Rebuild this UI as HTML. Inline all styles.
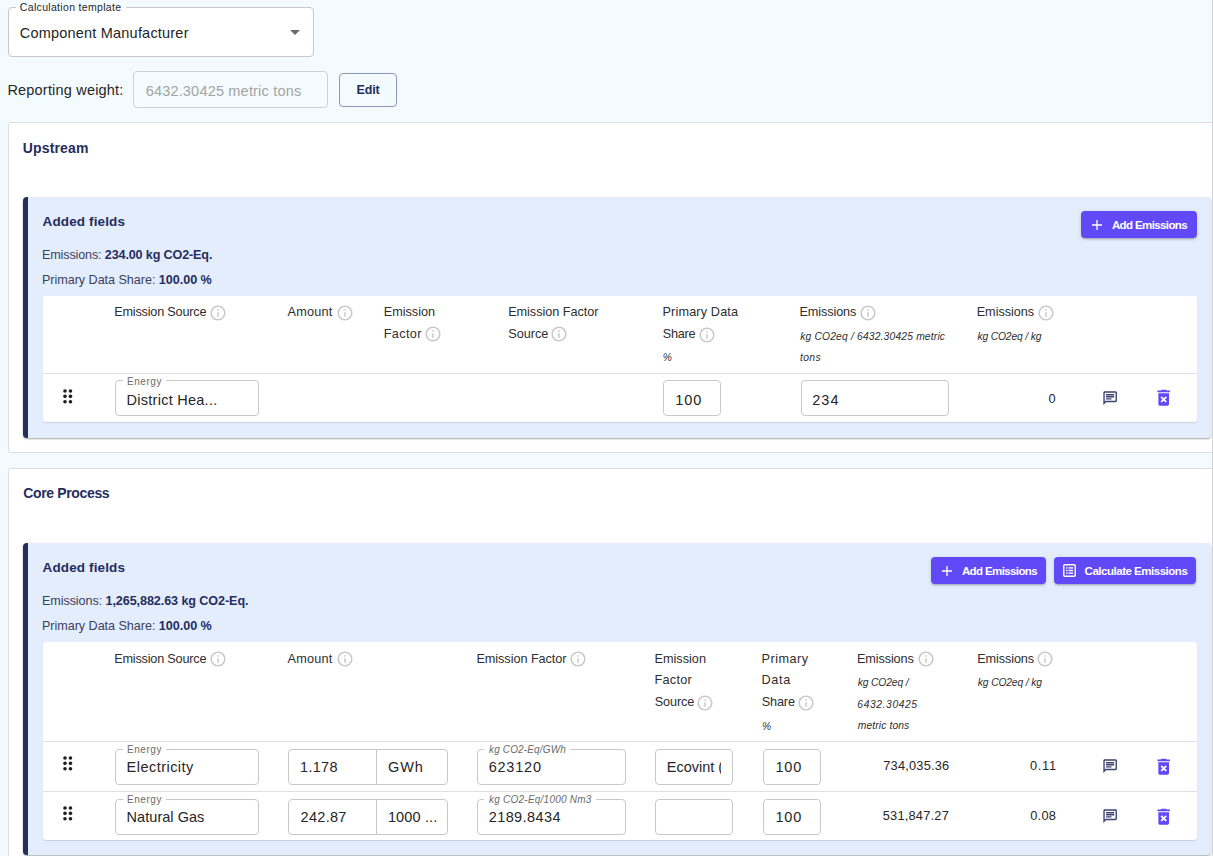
<!DOCTYPE html>
<html><head><meta charset="utf-8"><style>
html,body{margin:0;padding:0}
body{width:1213px;height:856px;overflow:hidden;position:relative;background:#f3fbfe;font-family:"Liberation Sans",sans-serif}
.t{position:absolute;white-space:nowrap}
.r{position:absolute}
b{font-weight:bold}
</style></head><body>
<div class="r" style="left:8px;top:7px;width:306px;height:50px;box-sizing:border-box;border:1px solid #c8c8c8;border-radius:4px;background:#fff"></div>
<div class="r" style="left:16px;top:7px;width:110px;height:1px;background:#fff"></div>
<div id="t0" class="t" style="left:19.86px;top:2.00px;font-size:10.5px;line-height:10.5px;color:#1f1f1f;letter-spacing:0.317px;">Calculation template</div>
<div id="t1" class="t" style="left:19.78px;top:26.00px;font-size:14.5px;line-height:14.5px;color:#1f1f1f;letter-spacing:0.204px;">Component Manufacturer</div>
<svg class="r" style="left:290px;top:30px" width="10" height="5" viewBox="0 0 10 5"><path d="M0 0h10L5 5z" fill="#6a6a6a"/></svg>
<div id="t2" class="t" style="left:7.43px;top:83.00px;font-size:14.5px;line-height:14.5px;color:#262626;letter-spacing:0.194px;">Reporting weight:</div>
<div class="r" style="left:133px;top:71px;width:195px;height:37px;box-sizing:border-box;border:1px solid #cdd1d6;border-radius:4px"></div>
<div id="t3" class="t" style="left:145.65px;top:84.00px;font-size:14.5px;line-height:14.5px;color:#a3a3a3;letter-spacing:0.189px;">6432.30425 metric tons</div>
<div class="r" style="left:339px;top:73px;width:58px;height:34px;box-sizing:border-box;border:1px solid #8e96b8;border-radius:4px"></div>
<div id="t4" class="t" style="left:356.47px;top:84.00px;font-size:12.5px;line-height:12.5px;font-weight:bold;color:#252d5e;letter-spacing:-0.102px;">Edit</div>
<div class="r" style="left:8px;top:122px;width:1225px;height:331px;box-sizing:border-box;border:1px solid #dedede;border-radius:3px;background:#fff"></div>
<div id="t5" class="t" style="left:22.85px;top:141.00px;font-size:14px;line-height:14px;font-weight:bold;color:#252d5e;letter-spacing:0.129px;">Upstream</div>
<div class="r" style="left:8px;top:468px;width:1225px;height:428px;box-sizing:border-box;border:1px solid #dedede;border-radius:3px;background:#fff"></div>
<div id="t6" class="t" style="left:23.25px;top:486.00px;font-size:14px;line-height:14px;font-weight:bold;color:#252d5e;letter-spacing:-0.352px;">Core Process</div>
<div class="r" style="left:23px;top:197px;width:1188px;height:240.5px;box-sizing:border-box;border-left:5px solid #232e5c;border-radius:4px;background:#e4edfc;box-shadow:0 1px 2px rgba(0,0,0,0.35)"></div>
<div id="t7" class="t" style="left:42.60px;top:215.00px;font-size:13.5px;line-height:13.5px;font-weight:bold;color:#252d5e;letter-spacing:0.126px;">Added fields</div>
<div id="t8" class="t" style="left:42.00px;top:249.00px;font-size:12.6px;line-height:12.6px;color:#3a4062;letter-spacing:-0.143px;">Emissions: <b style="color:#252d5e">234.00 kg CO2-Eq.</b></div>
<div id="t9" class="t" style="left:42.00px;top:274.00px;font-size:12.6px;line-height:12.6px;color:#3a4062;letter-spacing:-0.038px;">Primary Data Share: <b style="color:#252d5e">100.00 %</b></div>
<div class="r" style="left:1081px;top:211px;width:116px;height:27px;background:#6249f7;border-radius:4px;box-shadow:0 2px 2px -1px rgba(0,0,0,0.25),0 1px 4px rgba(0,0,0,0.12)"></div>
<svg class="r" style="left:1091.5px;top:219.5px" width="10" height="10" viewBox="0 0 10 10"><path d="M5 0v10M0 5h10" stroke="#fff" stroke-width="1.3"/></svg>
<div id="t10" class="t" style="left:1111.93px;top:220.00px;font-size:11.5px;line-height:11.5px;font-weight:bold;color:#fff;letter-spacing:-0.610px;">Add Emissions</div>
<div class="r" style="left:43px;top:296px;width:1154px;height:126px;background:#fff;border-radius:3px;box-shadow:0 1px 1px rgba(0,0,0,0.12)"></div>
<div class="r" style="left:43px;top:373px;width:1154px;height:1px;background:#e0e0e0"></div>
<div id="t11" class="t" style="left:114.17px;top:306.00px;font-size:12.7px;line-height:12.7px;color:#2e2e2e;letter-spacing:-0.204px;">Emission Source</div>
<div id="t12" class="t" style="left:287.58px;top:306.00px;font-size:12.7px;line-height:12.7px;color:#2e2e2e;letter-spacing:0.207px;">Amount</div>
<div id="t13" class="t" style="left:383.72px;top:306.00px;font-size:12.7px;line-height:12.7px;color:#2e2e2e;letter-spacing:-0.018px;">Emission</div>
<div id="t14" class="t" style="left:383.72px;top:328.00px;font-size:12.7px;line-height:12.7px;color:#2e2e2e;letter-spacing:0.339px;">Factor</div>
<div id="t15" class="t" style="left:508.17px;top:306.00px;font-size:12.7px;line-height:12.7px;color:#2e2e2e;letter-spacing:-0.050px;">Emission Factor</div>
<div id="t16" class="t" style="left:508.32px;top:328.00px;font-size:12.7px;line-height:12.7px;color:#2e2e2e;letter-spacing:-0.036px;">Source</div>
<div id="t17" class="t" style="left:662.51px;top:306.00px;font-size:12.7px;line-height:12.7px;color:#2e2e2e;letter-spacing:0.139px;">Primary Data</div>
<div id="t18" class="t" style="left:662.67px;top:328.00px;font-size:12.7px;line-height:12.7px;color:#2e2e2e;letter-spacing:-0.213px;">Share</div>
<div id="t19" class="t" style="left:662.66px;top:353.00px;font-size:10.3px;line-height:10.3px;font-style:italic;color:#2e2e2e;letter-spacing:0.000px;">%</div>
<div id="t20" class="t" style="left:799.42px;top:306.00px;font-size:12.7px;line-height:12.7px;color:#2e2e2e;letter-spacing:-0.101px;">Emissions</div>
<div id="t21" class="t" style="left:800.21px;top:332.00px;font-size:10.3px;line-height:10.3px;font-style:italic;color:#2e2e2e;letter-spacing:0.169px;">kg CO2eq / 6432.30425 metric</div>
<div id="t22" class="t" style="left:799.92px;top:353.00px;font-size:10.3px;line-height:10.3px;font-style:italic;color:#2e2e2e;letter-spacing:0.387px;">tons</div>
<div id="t23" class="t" style="left:976.72px;top:306.00px;font-size:12.7px;line-height:12.7px;color:#2e2e2e;letter-spacing:-0.058px;">Emissions</div>
<div id="t24" class="t" style="left:977.40px;top:332.00px;font-size:10.3px;line-height:10.3px;font-style:italic;color:#2e2e2e;letter-spacing:-0.140px;">kg CO2eq / kg</div>
<svg class="r" style="left:209.00px;top:303.80px" width="18" height="18" viewBox="0 0 24 24"><path d="M11 7h2v2h-2zm0 4h2v6h-2zm1-9C6.48 2 2 6.48 2 12s4.48 10 10 10 10-4.48 10-10S17.52 2 12 2zm0 18c-4.41 0-8-3.59-8-8s3.59-8 8-8 8 3.59 8 8-3.59 8-8 8z" fill="#c9c9c9"/></svg>
<svg class="r" style="left:335.70px;top:303.80px" width="18" height="18" viewBox="0 0 24 24"><path d="M11 7h2v2h-2zm0 4h2v6h-2zm1-9C6.48 2 2 6.48 2 12s4.48 10 10 10 10-4.48 10-10S17.52 2 12 2zm0 18c-4.41 0-8-3.59-8-8s3.59-8 8-8 8 3.59 8 8-3.59 8-8 8z" fill="#c9c9c9"/></svg>
<svg class="r" style="left:423.80px;top:325.40px" width="18" height="18" viewBox="0 0 24 24"><path d="M11 7h2v2h-2zm0 4h2v6h-2zm1-9C6.48 2 2 6.48 2 12s4.48 10 10 10 10-4.48 10-10S17.52 2 12 2zm0 18c-4.41 0-8-3.59-8-8s3.59-8 8-8 8 3.59 8 8-3.59 8-8 8z" fill="#c9c9c9"/></svg>
<svg class="r" style="left:550.00px;top:325.40px" width="18" height="18" viewBox="0 0 24 24"><path d="M11 7h2v2h-2zm0 4h2v6h-2zm1-9C6.48 2 2 6.48 2 12s4.48 10 10 10 10-4.48 10-10S17.52 2 12 2zm0 18c-4.41 0-8-3.59-8-8s3.59-8 8-8 8 3.59 8 8-3.59 8-8 8z" fill="#c9c9c9"/></svg>
<svg class="r" style="left:697.50px;top:325.60px" width="18" height="18" viewBox="0 0 24 24"><path d="M11 7h2v2h-2zm0 4h2v6h-2zm1-9C6.48 2 2 6.48 2 12s4.48 10 10 10 10-4.48 10-10S17.52 2 12 2zm0 18c-4.41 0-8-3.59-8-8s3.59-8 8-8 8 3.59 8 8-3.59 8-8 8z" fill="#c9c9c9"/></svg>
<svg class="r" style="left:858.60px;top:304.20px" width="18" height="18" viewBox="0 0 24 24"><path d="M11 7h2v2h-2zm0 4h2v6h-2zm1-9C6.48 2 2 6.48 2 12s4.48 10 10 10 10-4.48 10-10S17.52 2 12 2zm0 18c-4.41 0-8-3.59-8-8s3.59-8 8-8 8 3.59 8 8-3.59 8-8 8z" fill="#c9c9c9"/></svg>
<svg class="r" style="left:1036.60px;top:304.20px" width="18" height="18" viewBox="0 0 24 24"><path d="M11 7h2v2h-2zm0 4h2v6h-2zm1-9C6.48 2 2 6.48 2 12s4.48 10 10 10 10-4.48 10-10S17.52 2 12 2zm0 18c-4.41 0-8-3.59-8-8s3.59-8 8-8 8 3.59 8 8-3.59 8-8 8z" fill="#c9c9c9"/></svg>
<svg class="r" style="left:63.10px;top:389.05px" width="12" height="15" viewBox="0 0 12 15"><circle cx="2.00" cy="2.00" r="1.8" fill="#1e1e1e"/><circle cx="2.00" cy="7.37" r="1.8" fill="#1e1e1e"/><circle cx="2.00" cy="12.74" r="1.8" fill="#1e1e1e"/><circle cx="7.45" cy="2.00" r="1.8" fill="#1e1e1e"/><circle cx="7.45" cy="7.37" r="1.8" fill="#1e1e1e"/><circle cx="7.45" cy="12.74" r="1.8" fill="#1e1e1e"/></svg>
<div class="r" style="left:115px;top:380px;width:144px;height:36px;box-sizing:border-box;border:1px solid #c8c8c8;border-radius:4px;background:#fff"></div>
<div class="r" style="left:123px;top:380px;width:43px;height:1px;background:#fff"></div>
<div id="t25" class="t" style="left:126.89px;top:377.00px;font-size:10px;line-height:10px;color:#6b6b6b;letter-spacing:0.584px;">Energy</div>
<div id="t26" class="t" style="left:126.62px;top:393.00px;font-size:14.5px;line-height:14.5px;color:#262626;letter-spacing:0.257px;">District Hea...</div>
<div class="r" style="left:663px;top:380px;width:58px;height:36px;box-sizing:border-box;border:1px solid #c8c8c8;border-radius:4px;background:#fff"></div>
<div id="t27" class="t" style="left:675.30px;top:393.00px;font-size:14.5px;line-height:14.5px;color:#262626;letter-spacing:0.855px;">100</div>
<div class="r" style="left:801px;top:380px;width:148px;height:36px;box-sizing:border-box;border:1px solid #c8c8c8;border-radius:4px;background:#fff"></div>
<div id="t28" class="t" style="left:812.17px;top:393.00px;font-size:14.5px;line-height:14.5px;color:#262626;letter-spacing:1.054px;">234</div>
<div id="t29" class="t" style="left:1048.39px;top:393.00px;font-size:12.8px;line-height:12.8px;color:#262626;letter-spacing:0.000px;">0</div>
<svg class="r" style="left:1102.04px;top:390.04px" width="16.3" height="16.3" viewBox="0 0 24 24"><path d="M4 4h16v12H5.17L4 17.17V4m0-2c-1.1 0-1.99.9-1.99 2L2 22l4-4h14c1.1 0 2-.9 2-2V4c0-1.1-.9-2-2-2H4zm2 10h8v2H6v-2zm0-3h12v2H6V9zm0-3h12v2H6V6z" fill="#3a4272"/></svg>
<svg class="r" style="left:1152.64px;top:387.32px" width="21.4" height="21.4" viewBox="0 0 24 24"><path d="M6 19c0 1.1.9 2 2 2h8c1.1 0 2-.9 2-2V7H6v12zm2.46-7.12 1.41-1.41L12 12.59l2.12-2.12 1.41 1.41L13.41 14l2.12 2.12-1.41 1.41L12 15.41l-2.12 2.12-1.41-1.41L10.59 14l-2.13-2.12zM15.5 4l-1-1h-5l-1 1H5v2h14V4z" fill="#6249f7"/></svg>
<div class="r" style="left:23px;top:542.5px;width:1188px;height:312.20000000000005px;box-sizing:border-box;border-left:5px solid #232e5c;border-radius:4px;background:#e4edfc;box-shadow:0 1px 2px rgba(0,0,0,0.35)"></div>
<div id="t30" class="t" style="left:42.60px;top:561.00px;font-size:13.5px;line-height:13.5px;font-weight:bold;color:#252d5e;letter-spacing:0.126px;">Added fields</div>
<div id="t31" class="t" style="left:42.00px;top:595.00px;font-size:12.6px;line-height:12.6px;color:#3a4062;letter-spacing:-0.084px;">Emissions: <b style="color:#252d5e">1,265,882.63 kg CO2-Eq.</b></div>
<div id="t32" class="t" style="left:42.00px;top:620.00px;font-size:12.6px;line-height:12.6px;color:#3a4062;letter-spacing:-0.038px;">Primary Data Share: <b style="color:#252d5e">100.00 %</b></div>
<div class="r" style="left:931px;top:557px;width:115px;height:27px;background:#6249f7;border-radius:4px;box-shadow:0 2px 2px -1px rgba(0,0,0,0.25),0 1px 4px rgba(0,0,0,0.12)"></div>
<svg class="r" style="left:941.5px;top:565.5px" width="10" height="10" viewBox="0 0 10 10"><path d="M5 0v10M0 5h10" stroke="#fff" stroke-width="1.3"/></svg>
<div id="t33" class="t" style="left:961.93px;top:566.00px;font-size:11.5px;line-height:11.5px;font-weight:bold;color:#fff;letter-spacing:-0.610px;">Add Emissions</div>
<div class="r" style="left:1054px;top:557px;width:142px;height:27px;background:#6249f7;border-radius:4px;box-shadow:0 2px 2px -1px rgba(0,0,0,0.25),0 1px 4px rgba(0,0,0,0.12)"></div>
<svg class="r" style="left:1062.5px;top:564px" width="13" height="13" viewBox="0 0 13 13"><rect x="0.8" y="0.8" width="11.4" height="11.4" rx="1" fill="none" stroke="#fff" stroke-width="1.4"/><rect x="3" y="3.2" width="1.5" height="1.4" fill="#fff"/><rect x="5.5" y="3.2" width="4.5" height="1.4" fill="#fff"/><rect x="3" y="5.8" width="1.5" height="1.4" fill="#fff"/><rect x="5.5" y="5.8" width="4.5" height="1.4" fill="#fff"/><rect x="3" y="8.4" width="1.5" height="1.4" fill="#fff"/><rect x="5.5" y="8.4" width="4.5" height="1.4" fill="#fff"/></svg>
<div id="t34" class="t" style="left:1084.60px;top:566.00px;font-size:11.5px;line-height:11.5px;font-weight:bold;color:#fff;letter-spacing:-0.481px;">Calculate Emissions</div>
<div class="r" style="left:43px;top:642px;width:1154px;height:198.20000000000005px;background:#fff;border-radius:3px;box-shadow:0 1px 1px rgba(0,0,0,0.12)"></div>
<div class="r" style="left:43px;top:741px;width:1154px;height:1px;background:#e0e0e0"></div>
<div class="r" style="left:43px;top:791px;width:1154px;height:1px;background:#e0e0e0"></div>
<div id="t35" class="t" style="left:114.17px;top:653.00px;font-size:12.7px;line-height:12.7px;color:#2e2e2e;letter-spacing:-0.204px;">Emission Source</div>
<div id="t36" class="t" style="left:287.58px;top:653.00px;font-size:12.7px;line-height:12.7px;color:#2e2e2e;letter-spacing:0.207px;">Amount</div>
<div id="t37" class="t" style="left:476.42px;top:653.00px;font-size:12.7px;line-height:12.7px;color:#2e2e2e;letter-spacing:-0.058px;">Emission Factor</div>
<div id="t38" class="t" style="left:654.51px;top:653.00px;font-size:12.7px;line-height:12.7px;color:#2e2e2e;letter-spacing:0.003px;">Emission</div>
<div id="t39" class="t" style="left:654.51px;top:674.00px;font-size:12.7px;line-height:12.7px;color:#2e2e2e;letter-spacing:0.263px;">Factor</div>
<div id="t40" class="t" style="left:654.67px;top:696.00px;font-size:12.7px;line-height:12.7px;color:#2e2e2e;letter-spacing:-0.091px;">Source</div>
<div id="t41" class="t" style="left:761.50px;top:653.00px;font-size:12.7px;line-height:12.7px;color:#2e2e2e;letter-spacing:0.496px;">Primary</div>
<div id="t42" class="t" style="left:761.50px;top:674.00px;font-size:12.7px;line-height:12.7px;color:#2e2e2e;letter-spacing:0.651px;">Data</div>
<div id="t43" class="t" style="left:761.82px;top:696.00px;font-size:12.7px;line-height:12.7px;color:#2e2e2e;letter-spacing:-0.182px;">Share</div>
<div id="t44" class="t" style="left:762.00px;top:722.00px;font-size:10.3px;line-height:10.3px;font-style:italic;color:#2e2e2e;letter-spacing:0.000px;">%</div>
<div id="t45" class="t" style="left:856.92px;top:653.00px;font-size:12.7px;line-height:12.7px;color:#2e2e2e;letter-spacing:-0.109px;">Emissions</div>
<div id="t46" class="t" style="left:857.68px;top:678.00px;font-size:10.3px;line-height:10.3px;font-style:italic;color:#2e2e2e;letter-spacing:-0.123px;">kg CO2eq /</div>
<div id="t47" class="t" style="left:857.35px;top:700.00px;font-size:10.3px;line-height:10.3px;font-style:italic;color:#2e2e2e;letter-spacing:0.590px;">6432.30425</div>
<div id="t48" class="t" style="left:857.80px;top:721.00px;font-size:10.3px;line-height:10.3px;font-style:italic;color:#2e2e2e;letter-spacing:0.111px;">metric tons</div>
<div id="t49" class="t" style="left:977.17px;top:653.00px;font-size:12.7px;line-height:12.7px;color:#2e2e2e;letter-spacing:-0.106px;">Emissions</div>
<div id="t50" class="t" style="left:977.85px;top:678.00px;font-size:10.3px;line-height:10.3px;font-style:italic;color:#2e2e2e;letter-spacing:-0.150px;">kg CO2eq / kg</div>
<svg class="r" style="left:209.00px;top:650.20px" width="18" height="18" viewBox="0 0 24 24"><path d="M11 7h2v2h-2zm0 4h2v6h-2zm1-9C6.48 2 2 6.48 2 12s4.48 10 10 10 10-4.48 10-10S17.52 2 12 2zm0 18c-4.41 0-8-3.59-8-8s3.59-8 8-8 8 3.59 8 8-3.59 8-8 8z" fill="#c9c9c9"/></svg>
<svg class="r" style="left:335.70px;top:650.20px" width="18" height="18" viewBox="0 0 24 24"><path d="M11 7h2v2h-2zm0 4h2v6h-2zm1-9C6.48 2 2 6.48 2 12s4.48 10 10 10 10-4.48 10-10S17.52 2 12 2zm0 18c-4.41 0-8-3.59-8-8s3.59-8 8-8 8 3.59 8 8-3.59 8-8 8z" fill="#c9c9c9"/></svg>
<svg class="r" style="left:569.00px;top:650.20px" width="18" height="18" viewBox="0 0 24 24"><path d="M11 7h2v2h-2zm0 4h2v6h-2zm1-9C6.48 2 2 6.48 2 12s4.48 10 10 10 10-4.48 10-10S17.52 2 12 2zm0 18c-4.41 0-8-3.59-8-8s3.59-8 8-8 8 3.59 8 8-3.59 8-8 8z" fill="#c9c9c9"/></svg>
<svg class="r" style="left:695.90px;top:693.80px" width="18" height="18" viewBox="0 0 24 24"><path d="M11 7h2v2h-2zm0 4h2v6h-2zm1-9C6.48 2 2 6.48 2 12s4.48 10 10 10 10-4.48 10-10S17.52 2 12 2zm0 18c-4.41 0-8-3.59-8-8s3.59-8 8-8 8 3.59 8 8-3.59 8-8 8z" fill="#c9c9c9"/></svg>
<svg class="r" style="left:797.40px;top:693.80px" width="18" height="18" viewBox="0 0 24 24"><path d="M11 7h2v2h-2zm0 4h2v6h-2zm1-9C6.48 2 2 6.48 2 12s4.48 10 10 10 10-4.48 10-10S17.52 2 12 2zm0 18c-4.41 0-8-3.59-8-8s3.59-8 8-8 8 3.59 8 8-3.59 8-8 8z" fill="#c9c9c9"/></svg>
<svg class="r" style="left:916.70px;top:650.20px" width="18" height="18" viewBox="0 0 24 24"><path d="M11 7h2v2h-2zm0 4h2v6h-2zm1-9C6.48 2 2 6.48 2 12s4.48 10 10 10 10-4.48 10-10S17.52 2 12 2zm0 18c-4.41 0-8-3.59-8-8s3.59-8 8-8 8 3.59 8 8-3.59 8-8 8z" fill="#c9c9c9"/></svg>
<svg class="r" style="left:1036.20px;top:650.20px" width="18" height="18" viewBox="0 0 24 24"><path d="M11 7h2v2h-2zm0 4h2v6h-2zm1-9C6.48 2 2 6.48 2 12s4.48 10 10 10 10-4.48 10-10S17.52 2 12 2zm0 18c-4.41 0-8-3.59-8-8s3.59-8 8-8 8 3.59 8 8-3.59 8-8 8z" fill="#c9c9c9"/></svg>
<svg class="r" style="left:63.10px;top:756.00px" width="12" height="15" viewBox="0 0 12 15"><circle cx="2.00" cy="2.00" r="1.8" fill="#1e1e1e"/><circle cx="2.00" cy="7.37" r="1.8" fill="#1e1e1e"/><circle cx="2.00" cy="12.74" r="1.8" fill="#1e1e1e"/><circle cx="7.45" cy="2.00" r="1.8" fill="#1e1e1e"/><circle cx="7.45" cy="7.37" r="1.8" fill="#1e1e1e"/><circle cx="7.45" cy="12.74" r="1.8" fill="#1e1e1e"/></svg>
<div class="r" style="left:115px;top:748.5px;width:144px;height:36px;box-sizing:border-box;border:1px solid #c8c8c8;border-radius:4px;background:#fff"></div>
<div class="r" style="left:123px;top:748.5px;width:43px;height:1px;background:#fff"></div>
<div id="t51" class="t" style="left:126.89px;top:745.00px;font-size:10px;line-height:10px;color:#6b6b6b;letter-spacing:0.584px;">Energy</div>
<div id="t52" class="t" style="left:126.62px;top:760.00px;font-size:14.5px;line-height:14.5px;color:#262626;letter-spacing:0.465px;">Electricity</div>
<div class="r" style="left:288px;top:748.5px;width:160px;height:36px;box-sizing:border-box;border:1px solid #c8c8c8;border-radius:4px;background:#fff"></div>
<div class="r" style="left:375.5px;top:748.5px;width:1px;height:36px;background:#c8c8c8"></div>
<div id="t53" class="t" style="left:300.09px;top:760.00px;font-size:14.5px;line-height:14.5px;color:#262626;letter-spacing:0.273px;">1.178</div>
<div id="t54" class="t" style="left:388.08px;top:760.00px;font-size:14.5px;line-height:14.5px;color:#262626;letter-spacing:0.871px;">GWh</div>
<div class="r" style="left:477px;top:748.5px;width:149px;height:36px;box-sizing:border-box;border:1px solid #c8c8c8;border-radius:4px;background:#fff"></div>
<div class="r" style="left:484.4px;top:748.5px;width:85.9px;height:1px;background:#fff"></div>
<div id="t55" class="t" style="left:489.01px;top:745.00px;font-size:10px;line-height:10px;font-style:italic;color:#6b6b6b;letter-spacing:0.152px;">kg CO2-Eq/GWh</div>
<div id="t56" class="t" style="left:488.70px;top:760.00px;font-size:14.5px;line-height:14.5px;color:#262626;letter-spacing:0.778px;">623120</div>
<div class="r" style="left:655px;top:748.5px;width:78px;height:36px;box-sizing:border-box;border:1px solid #c8c8c8;border-radius:4px;background:#fff"></div>
<div id="t57" class="t" style="left:666.76px;top:760.00px;font-size:14.5px;line-height:14.5px;color:#262626;letter-spacing:0.000px;width:54px;overflow:hidden">Ecovint (</div>
<div class="r" style="left:763px;top:748.5px;width:58px;height:36px;box-sizing:border-box;border:1px solid #c8c8c8;border-radius:4px;background:#fff"></div>
<div id="t58" class="t" style="left:775.43px;top:760.00px;font-size:14.5px;line-height:14.5px;color:#262626;letter-spacing:0.803px;">100</div>
<div id="t59" class="t" style="left:949.44px;top:760.00px;font-size:12.8px;line-height:12.8px;color:#262626;letter-spacing:0.217px;transform:translateX(-100%);">734,035.36</div>
<div id="t60" class="t" style="left:1056.69px;top:760.00px;font-size:12.8px;line-height:12.8px;color:#262626;letter-spacing:0.658px;transform:translateX(-100%);">0.11</div>
<svg class="r" style="left:1102.04px;top:758.04px" width="16.3" height="16.3" viewBox="0 0 24 24"><path d="M4 4h16v12H5.17L4 17.17V4m0-2c-1.1 0-1.99.9-1.99 2L2 22l4-4h14c1.1 0 2-.9 2-2V4c0-1.1-.9-2-2-2H4zm2 10h8v2H6v-2zm0-3h12v2H6V9zm0-3h12v2H6V6z" fill="#3a4272"/></svg>
<svg class="r" style="left:1152.64px;top:755.73px" width="21.4" height="21.4" viewBox="0 0 24 24"><path d="M6 19c0 1.1.9 2 2 2h8c1.1 0 2-.9 2-2V7H6v12zm2.46-7.12 1.41-1.41L12 12.59l2.12-2.12 1.41 1.41L13.41 14l2.12 2.12-1.41 1.41L12 15.41l-2.12 2.12-1.41-1.41L10.59 14l-2.13-2.12zM15.5 4l-1-1h-5l-1 1H5v2h14V4z" fill="#6249f7"/></svg>
<svg class="r" style="left:63.10px;top:806.00px" width="12" height="15" viewBox="0 0 12 15"><circle cx="2.00" cy="2.00" r="1.8" fill="#1e1e1e"/><circle cx="2.00" cy="7.37" r="1.8" fill="#1e1e1e"/><circle cx="2.00" cy="12.74" r="1.8" fill="#1e1e1e"/><circle cx="7.45" cy="2.00" r="1.8" fill="#1e1e1e"/><circle cx="7.45" cy="7.37" r="1.8" fill="#1e1e1e"/><circle cx="7.45" cy="12.74" r="1.8" fill="#1e1e1e"/></svg>
<div class="r" style="left:115px;top:798.5px;width:144px;height:36px;box-sizing:border-box;border:1px solid #c8c8c8;border-radius:4px;background:#fff"></div>
<div class="r" style="left:123px;top:798.5px;width:43px;height:1px;background:#fff"></div>
<div id="t61" class="t" style="left:126.89px;top:795.00px;font-size:10px;line-height:10px;color:#6b6b6b;letter-spacing:0.584px;">Energy</div>
<div id="t62" class="t" style="left:126.62px;top:810.00px;font-size:14.5px;line-height:14.5px;color:#262626;letter-spacing:0.035px;">Natural Gas</div>
<div class="r" style="left:288px;top:798.5px;width:160px;height:36px;box-sizing:border-box;border:1px solid #c8c8c8;border-radius:4px;background:#fff"></div>
<div class="r" style="left:375.5px;top:798.5px;width:1px;height:36px;background:#c8c8c8"></div>
<div id="t63" class="t" style="left:300.52px;top:810.00px;font-size:14.5px;line-height:14.5px;color:#262626;letter-spacing:0.310px;">242.87</div>
<div id="t64" class="t" style="left:387.88px;top:810.00px;font-size:14.5px;line-height:14.5px;color:#262626;letter-spacing:0.149px;">1000 ...</div>
<div class="r" style="left:477px;top:798.5px;width:149px;height:36px;box-sizing:border-box;border:1px solid #c8c8c8;border-radius:4px;background:#fff"></div>
<div class="r" style="left:484.4px;top:798.5px;width:111.9px;height:1px;background:#fff"></div>
<div id="t65" class="t" style="left:489.01px;top:795.00px;font-size:10px;line-height:10px;font-style:italic;color:#6b6b6b;letter-spacing:0.238px;">kg CO2-Eq/1000 Nm3</div>
<div id="t66" class="t" style="left:488.69px;top:810.00px;font-size:14.5px;line-height:14.5px;color:#262626;letter-spacing:0.411px;">2189.8434</div>
<div class="r" style="left:655px;top:798.5px;width:78px;height:36px;box-sizing:border-box;border:1px solid #c8c8c8;border-radius:4px;background:#fff"></div>
<div class="r" style="left:763px;top:798.5px;width:58px;height:36px;box-sizing:border-box;border:1px solid #c8c8c8;border-radius:4px;background:#fff"></div>
<div id="t67" class="t" style="left:775.43px;top:810.00px;font-size:14.5px;line-height:14.5px;color:#262626;letter-spacing:0.803px;">100</div>
<div id="t68" class="t" style="left:949.02px;top:810.00px;font-size:12.8px;line-height:12.8px;color:#262626;letter-spacing:0.225px;transform:translateX(-100%);">531,847.27</div>
<div id="t69" class="t" style="left:1056.22px;top:810.00px;font-size:12.8px;line-height:12.8px;color:#262626;letter-spacing:0.290px;transform:translateX(-100%);">0.08</div>
<svg class="r" style="left:1102.04px;top:808.04px" width="16.3" height="16.3" viewBox="0 0 24 24"><path d="M4 4h16v12H5.17L4 17.17V4m0-2c-1.1 0-1.99.9-1.99 2L2 22l4-4h14c1.1 0 2-.9 2-2V4c0-1.1-.9-2-2-2H4zm2 10h8v2H6v-2zm0-3h12v2H6V9zm0-3h12v2H6V6z" fill="#3a4272"/></svg>
<svg class="r" style="left:1152.64px;top:805.73px" width="21.4" height="21.4" viewBox="0 0 24 24"><path d="M6 19c0 1.1.9 2 2 2h8c1.1 0 2-.9 2-2V7H6v12zm2.46-7.12 1.41-1.41L12 12.59l2.12-2.12 1.41 1.41L13.41 14l2.12 2.12-1.41 1.41L12 15.41l-2.12 2.12-1.41-1.41L10.59 14l-2.13-2.12zM15.5 4l-1-1h-5l-1 1H5v2h14V4z" fill="#6249f7"/></svg>
<div class="r" style="left:1212px;top:0px;width:1px;height:856px;background:#d0d4d8"></div>
</body></html>
